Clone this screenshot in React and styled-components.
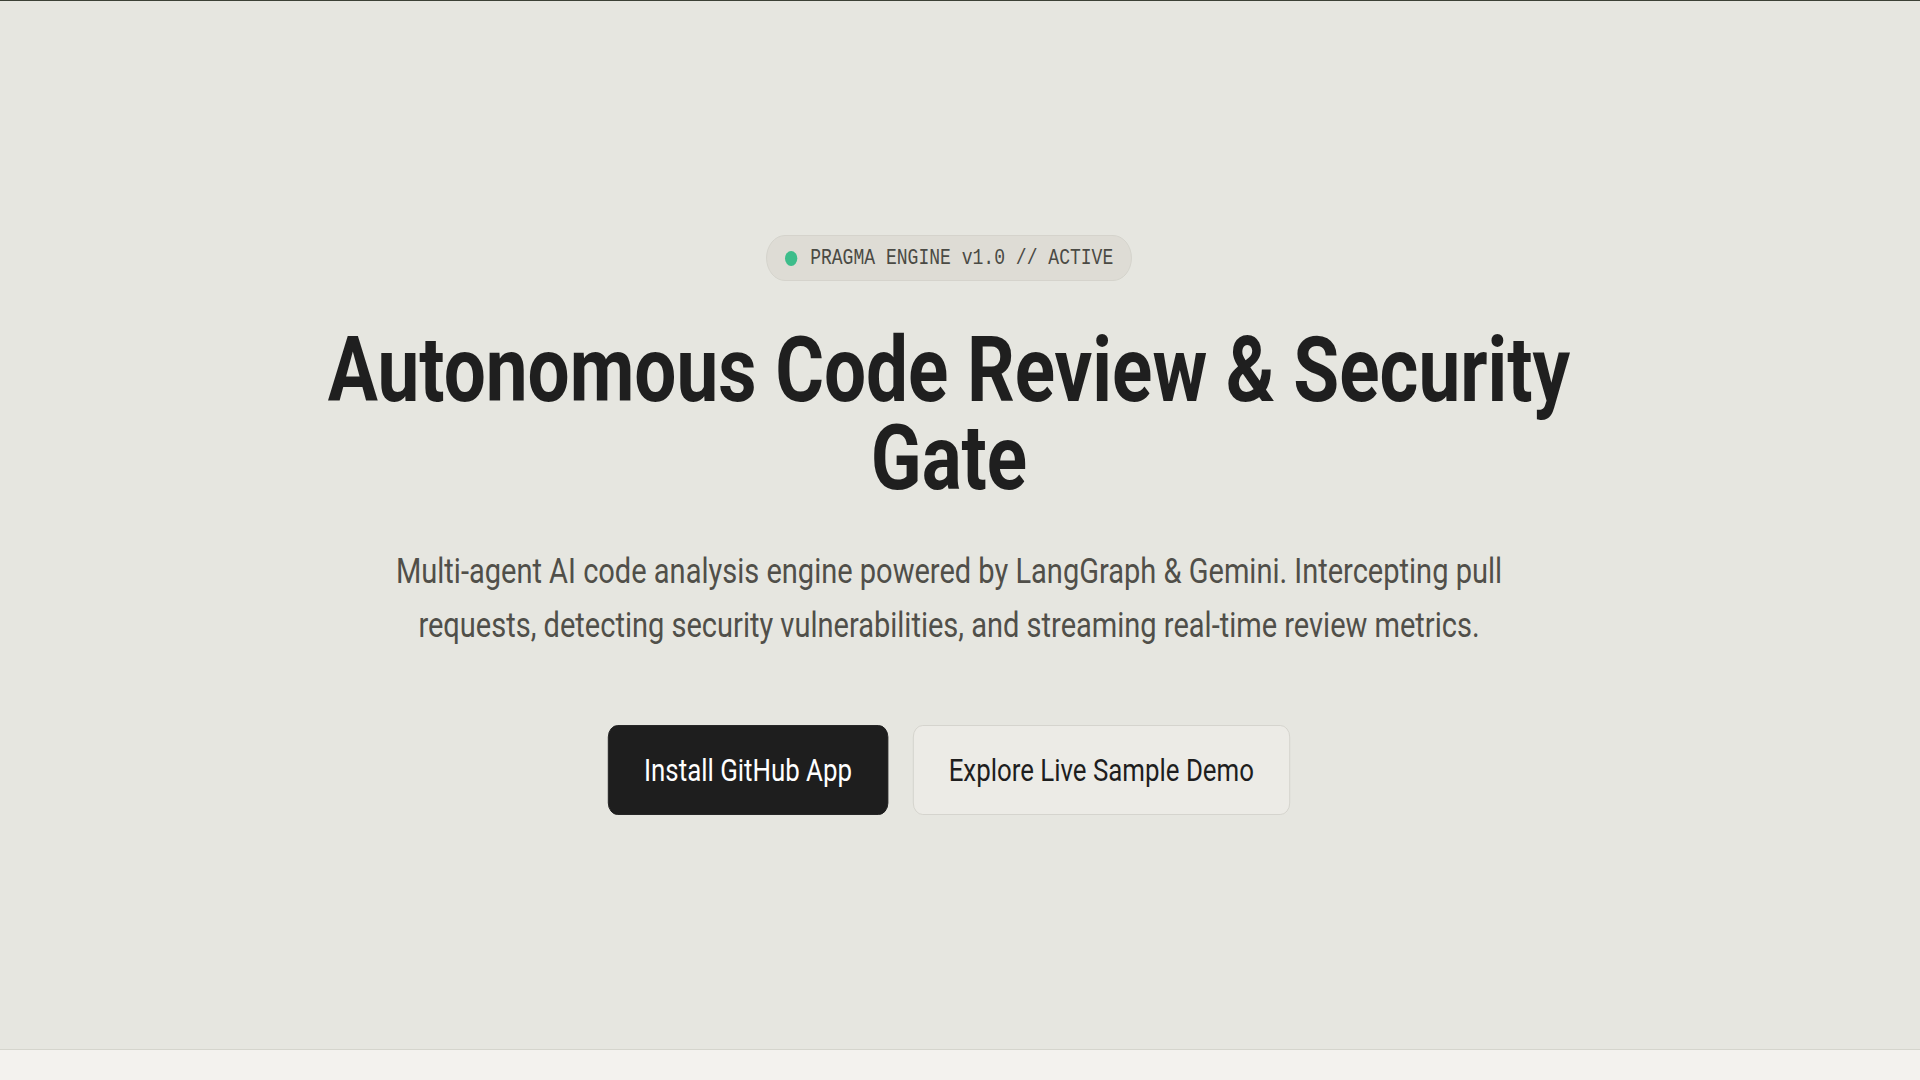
import React from "react";
import styled, { createGlobalStyle } from "styled-components";

const GlobalStyle = createGlobalStyle`
  html, body {
    margin: 0;
    padding: 0;
    background: #e6e6e0;
  }
  body {
    font-family: Roboto, "Liberation Sans", sans-serif;
    color: #1f1f1f;
    border-top: 1px solid #3c4136;
  }
`;

const Hero = styled.section`
  height: 1049px;
  box-sizing: border-box;
  padding-right: 22px;
  display: flex;
  flex-direction: column;
  align-items: center;
  justify-content: center;
  border-bottom: 1px solid #d5d5cd;
  text-align: center;
  overflow: hidden;
`;

/* the whole hero column is set in a narrow (condensed) proportion */
const Stack = styled.div`
  display: flex;
  flex-direction: column;
  align-items: center;
  transform: scaleX(0.82);
`;

const Badge = styled.div`
  display: inline-flex;
  align-items: center;
  gap: 16px;
  height: 46px;
  box-sizing: border-box;
  padding: 0 22px;
  border: 1px solid #d3d2ca;
  border-radius: 999px;
  background: #dedcd5;
  font-family: "Liberation Mono", "DejaVu Sans Mono", monospace;
  font-size: 22px;
  color: #4a4a44;
`;

const Dot = styled.span`
  width: 15px;
  height: 15px;
  border-radius: 50%;
  background: #3dbd8b;
`;

const Title = styled.h1`
  margin: 45px 0 0;
  max-width: 1640px;
  font-size: 91px;
  line-height: 88px;
  font-weight: 700;
  letter-spacing: 0;
  color: #1f1f1f;
`;

const Lead = styled.p`
  margin: 42px 0 0;
  max-width: 1420px;
  font-size: 35.4px;
  line-height: 54px;
  color: #504f49;
`;

const Actions = styled.div`
  display: flex;
  gap: 30px;
  margin-top: 73px;
`;

const Button = styled.a`
  display: inline-flex;
  align-items: center;
  justify-content: center;
  height: 90px;
  box-sizing: border-box;
  padding: 0 43px;
  border-radius: 12px;
  border: 1px solid ${(p) => (p.$primary ? "#1e1e1e" : "#d3d2cb")};
  background: ${(p) => (p.$primary ? "#1e1e1e" : "#ecebe6")};
  color: ${(p) => (p.$primary ? "#ffffff" : "#1e1e1e")};
  font-size: 31.5px;
  font-weight: 400;
  text-decoration: none;
  cursor: pointer;
`;

const Below = styled.section`
  height: 3560px;
  background: #f3f2ee;
`;

export default function App() {
  return (
    <>
      <GlobalStyle />
      <Hero>
        <Stack>
          <Badge>
            <Dot />
            PRAGMA ENGINE v1.0 // ACTIVE
          </Badge>
          <Title>Autonomous Code Review &amp; Security Gate</Title>
          <Lead>
            Multi-agent AI code analysis engine powered by LangGraph &amp; Gemini. Intercepting pull
            requests, detecting security vulnerabilities, and streaming real-time review metrics.
          </Lead>
          <Actions>
            <Button $primary>Install GitHub App</Button>
            <Button>Explore Live Sample Demo</Button>
          </Actions>
        </Stack>
      </Hero>
      <Below />
    </>
  );
}
